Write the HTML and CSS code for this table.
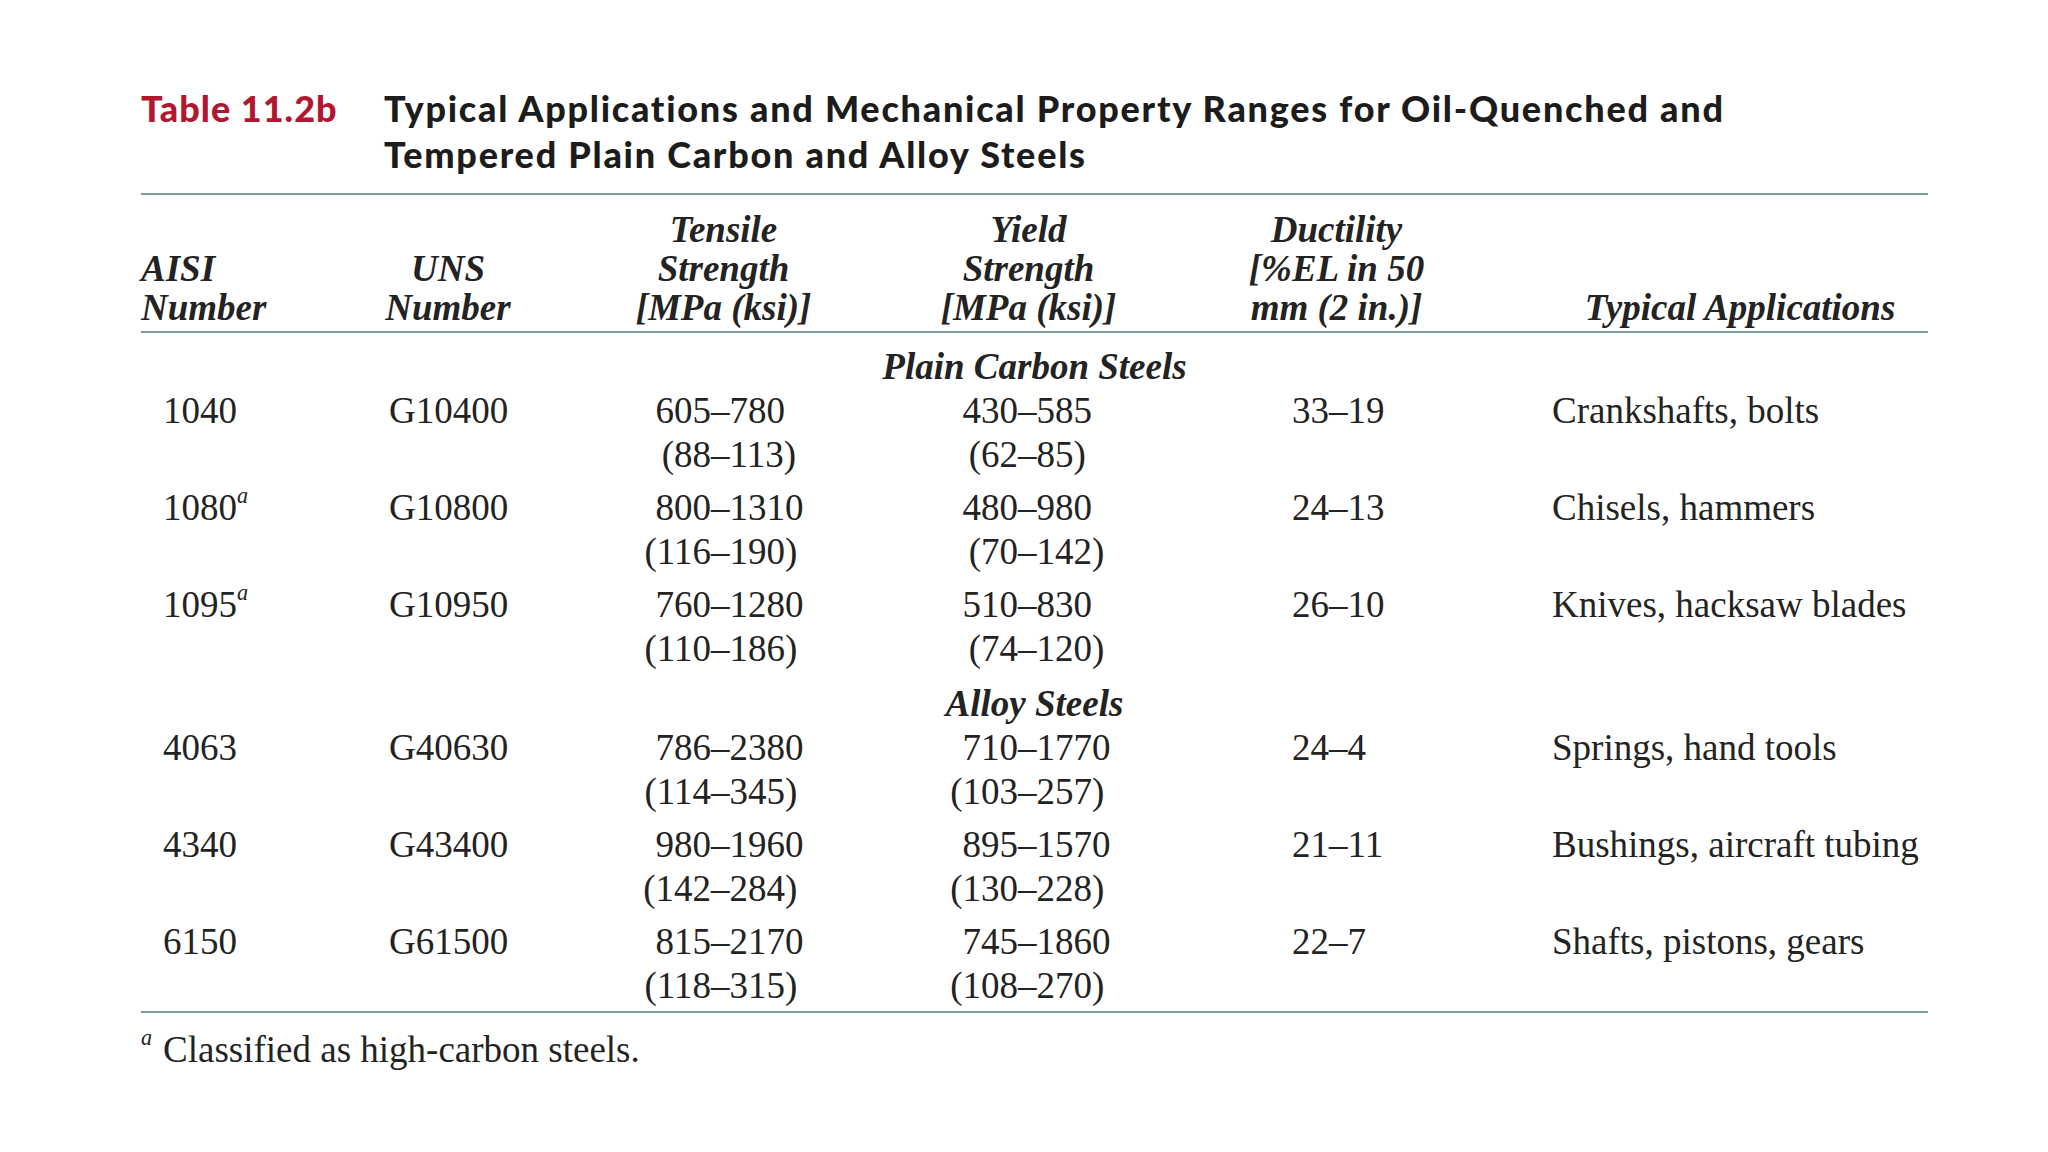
FILE: index.html
```html
<!DOCTYPE html>
<html lang="en">
<head>
<meta charset="utf-8">
<title>Table 11.2b</title>
<link rel="stylesheet" href="styles.css">
</head>
<body>
<div class="page">
  <div class="caption">
    <span class="label">Table 11.2b</span>
    <h1 class="title">Typical Applications and Mechanical Property Ranges for Oil-Quenched and<br>Tempered Plain Carbon and Alloy Steels</h1>
  </div>

  <div class="table">
    <div class="row head">
      <div class="c c1"><div>AISI</div><div>Number</div></div>
      <div class="c c2"><div>UNS</div><div>Number</div></div>
      <div class="c c3"><div>Tensile</div><div>Strength</div><div>[MPa (ksi)]</div></div>
      <div class="c c4"><div>Yield</div><div>Strength</div><div>[MPa (ksi)]</div></div>
      <div class="c c5"><div>Ductility</div><div>[%EL in 50</div><div>mm (2 in.)]</div></div>
      <div class="c c6"><div>Typical Applications</div></div>
    </div>

    <div class="group first">Plain Carbon Steels</div>

    <div class="row data">
      <div class="c c1">1040</div>
      <div class="c c2">G10400</div>
      <div class="c c3 rng"><span>605</span><span>–780</span><span>(88</span><span>–113)</span></div>
      <div class="c c4 rng"><span>430</span><span>–585</span><span>(62</span><span>–85)</span></div>
      <div class="c c5">33–19</div>
      <div class="c c6">Crankshafts, bolts</div>
    </div>
    <div class="row data">
      <div class="c c1">1080<sup class="fn">a</sup></div>
      <div class="c c2">G10800</div>
      <div class="c c3 rng"><span>800</span><span>–1310</span><span>(116</span><span>–190)</span></div>
      <div class="c c4 rng"><span>480</span><span>–980</span><span>(70</span><span>–142)</span></div>
      <div class="c c5">24–13</div>
      <div class="c c6">Chisels, hammers</div>
    </div>
    <div class="row data">
      <div class="c c1">1095<sup class="fn">a</sup></div>
      <div class="c c2">G10950</div>
      <div class="c c3 rng"><span>760</span><span>–1280</span><span>(110</span><span>–186)</span></div>
      <div class="c c4 rng"><span>510</span><span>–830</span><span>(74</span><span>–120)</span></div>
      <div class="c c5">26–10</div>
      <div class="c c6">Knives, hacksaw blades</div>
    </div>

    <div class="group">Alloy Steels</div>

    <div class="row data">
      <div class="c c1">4063</div>
      <div class="c c2">G40630</div>
      <div class="c c3 rng"><span>786</span><span>–2380</span><span>(114</span><span>–345)</span></div>
      <div class="c c4 rng"><span>710</span><span>–1770</span><span>(103</span><span>–257)</span></div>
      <div class="c c5">24–4</div>
      <div class="c c6">Springs, hand tools</div>
    </div>
    <div class="row data">
      <div class="c c1">4340</div>
      <div class="c c2">G43400</div>
      <div class="c c3 rng"><span>980</span><span>–1960</span><span>(142</span><span>–284)</span></div>
      <div class="c c4 rng"><span>895</span><span>–1570</span><span>(130</span><span>–228)</span></div>
      <div class="c c5">21–11</div>
      <div class="c c6">Bushings, aircraft tubing</div>
    </div>
    <div class="row data last">
      <div class="c c1">6150</div>
      <div class="c c2">G61500</div>
      <div class="c c3 rng"><span>815</span><span>–2170</span><span>(118</span><span>–315)</span></div>
      <div class="c c4 rng"><span>745</span><span>–1860</span><span>(108</span><span>–270)</span></div>
      <div class="c c5">22–7</div>
      <div class="c c6">Shafts, pistons, gears</div>
    </div>
  </div>

  <p class="note"><sup class="fn note-mark">a</sup>Classified as high-carbon steels.</p>
</div>
</body>
</html>
```

FILE: styles.css
```css
html, body {
  margin: 0;
  padding: 0;
  background: #ffffff;
}

.page {
  width: 1787px;
  padding: 85px 0 0 141px;
  font-family: "Liberation Serif", "Times New Roman", serif;
  color: #232323;
}

/* Caption */
.caption {
  display: flex;
  align-items: flex-start;
  font-family: Lato, "Open Sans", sans-serif;
  font-weight: 900;
  font-size: 36px;
  line-height: 46px;
}

.label {
  width: 243px;
  flex: none;
  color: #b3172f;
  letter-spacing: 1px;
}

.title {
  margin: 0;
  font-size: inherit;
  font-weight: 900;
  line-height: inherit;
  color: #1c1c1c;
  letter-spacing: 1.75px;
}

/* Table */
.table {
  margin-top: 16px;
  border-top: 2px solid #7d9e98;
  border-bottom: 2px solid #7d9e98;
}

.row {
  display: grid;
  grid-template-columns: 244px 246px 305px 305px 311px 376px;
}

.head {
  padding: 15px 0 4px;
  border-bottom: 2px solid #7d9e98;
  font-weight: 700;
  font-style: italic;
  font-size: 37px;
  line-height: 39px;
}

.head .c {
  display: flex;
  flex-direction: column;
  justify-content: flex-end;
}

.head .c2,
.head .c3,
.head .c4,
.head .c5 {
  text-align: center;
  padding-right: 120px;
}

.head .c6 {
  text-align: center;
}

.group {
  text-align: center;
  font-weight: 700;
  font-style: italic;
  font-size: 37px;
  line-height: 44px;
  margin-top: 2px;
}

.group.first {
  margin-top: 12px;
}

.data {
  font-size: 37px;
  line-height: 44px;
  padding-bottom: 9px;
}

.data.last {
  padding-bottom: 3px;
}

.data .c1 {
  padding-left: 22px;
}

.data .c2 {
  padding-left: 4px;
}

.data .c5 {
  padding-left: 51px;
}

.rng {
  display: grid;
  align-content: start;
}

.data .c3 {
  grid-template-columns: 80px auto;
}

.data .c4 {
  grid-template-columns: 82px auto;
}

.rng span:nth-child(odd) {
  text-align: right;
}

.fn {
  font-style: italic;
  font-size: 0.6em;
  line-height: 0;
  vertical-align: 0.75em;
}

.note {
  margin: 15px 0 0;
  font-size: 37px;
  line-height: 44px;
}

.note-mark {
  display: inline-block;
  width: 22px;
}
```
